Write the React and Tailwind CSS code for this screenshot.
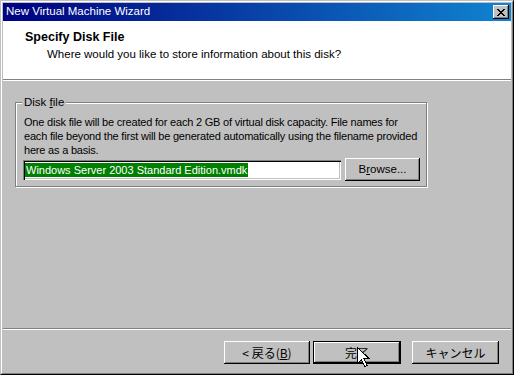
import React from "react"

const FONT = { fontFamily: '"Liberation Sans", Arial, "Noto Sans CJK JP", sans-serif' }
const JP = { fontFamily: '"Noto Sans CJK JP", sans-serif' }

// classic 3D bevel for push buttons
const bevel =
  "bg-[#c0c0c0] shadow-[inset_-1px_-1px_0_#000,inset_1px_1px_0_#fff,inset_-2px_-2px_0_#808080]"

function PushButton({ children, width, isDefault }) {
  return (
    <div className={`${width} h-[23px] ${isDefault ? "border border-black" : ""}`}>
      <div className={`w-full h-full ${bevel} flex items-center justify-center text-[12px] text-black`}>
        {children}
      </div>
    </div>
  )
}

function Cursor() {
  return (
    <svg width="13" height="21" viewBox="0 0 13 21" className="absolute left-[356px] top-[346px]">
      <path
        d="M0.5 0.5 L0.5 16.5 L4.5 12.5 L7.5 19.5 L10 18.5 L7 11.5 L12 11.5 Z"
        fill="#fff"
        stroke="#000"
        strokeWidth="1"
        shapeRendering="crispEdges"
      />
    </svg>
  )
}

export default function App() {
  return (
    <div className="relative w-[514px] h-[375px] border border-t-[#c0c0c0] border-l-[#c0c0c0] border-b-black border-r-black" style={FONT}>
      <div className="w-full h-full border border-t-white border-l-white border-b-[#808080] border-r-[#808080] bg-[#c0c0c0] p-px flex flex-col">
        {/* TITLE BAR */}
        <div className="h-[18px] shrink-0 flex items-center justify-between pl-[3px] pr-[2px] bg-[linear-gradient(90deg,#000080_0%,#1084d0_100%)]">
          <span className="text-white text-[11.5px] leading-none">New Virtual Machine Wizard</span>
          <div className={`w-[16px] h-[14px] ${bevel} flex items-center justify-center`}>
            <svg width="8" height="7" viewBox="0 0 8 7" shapeRendering="crispEdges">
              <path d="M0 0h2v1h1v1h2v-1h1v-1h2v1h-1v1h-1v1h-1v1h1v1h1v1h1v1h-2v-1h-1v-1h-2v1h-1v1h-2v-1h1v-1h1v-1h1v-1h-1v-1h-1v-1h-1z" fill="#000" />
            </svg>
          </div>
        </div>

        {/* HEADER */}
        <div className="h-[59px] shrink-0 bg-white border-b border-[#808080] pl-[22px] pt-[9px]">
          <div className="font-bold text-[12.5px] leading-[14px] text-black">Specify Disk File</div>
          <div className="pl-[22px] pt-[3px] text-[11.5px] leading-[14px] text-black">
            Where would you like to store information about this disk?
          </div>
        </div>
        <div className="h-px shrink-0 bg-white" />

        {/* BODY */}
        <div className="flex-1 pl-[12px] pt-[21px]">
          <div className="relative w-[412px] h-[85px] border border-[#808080] shadow-[inset_1px_1px_0_#fff,1px_1px_0_#fff] pl-[8px] pt-[12px]">
            <span className="absolute left-[6px] top-[-8px] bg-[#c0c0c0] px-[2px] text-[11.5px] leading-[14px] text-black">
              Disk <span className="underline">f</span>ile
            </span>
            <p className="whitespace-nowrap text-[11px] leading-[14px] tracking-[-0.2px] text-black">
              One disk file will be created for each 2 GB of virtual disk capacity. File names for
              <br />
              each file beyond the first will be generated automatically using the filename provided
              <br />
              here as a basis.
            </p>
            <div className="flex items-center mt-[1px]">
              <div className="w-[318px] h-[20px] -ml-[1px] bg-white shadow-[inset_1px_1px_0_#808080,inset_2px_2px_0_#000,inset_-1px_-1px_0_#fff,inset_-2px_-2px_0_#c0c0c0] pl-[2px] pt-[3px]">
                <span className="bg-[#008000] text-white text-[11px] leading-[14px] block w-fit px-px">
                  Windows Server 2003 Standard Edition.vmdk
                </span>
              </div>
              <div className="ml-[4px]">
                <PushButton width="w-[75px]">
                  <span className="text-[11.5px]">B<span className="underline">r</span>owse...</span>
                </PushButton>
              </div>
            </div>
          </div>
        </div>

        {/* FOOTER */}
        <div className="h-px shrink-0 bg-[#808080]" />
        <div className="h-px shrink-0 bg-white" />
        <div className="h-[42px] shrink-0 flex justify-end pt-[11px] pr-[12px]">
          <PushButton width="w-[86px]">
            <span style={JP} className="text-[12px]">
              &lt; 戻る(<span className="underline">B</span>)
            </span>
          </PushButton>
          <div className="ml-[3px]">
            <PushButton width="w-[88px]" isDefault>
              <span style={JP} className="text-[12px]">完了</span>
            </PushButton>
          </div>
          <div className="ml-[11px]">
            <PushButton width="w-[87px]">
              <span style={JP} className="text-[12px]">キャンセル</span>
            </PushButton>
          </div>
        </div>
      </div>
      <Cursor />
    </div>
  )
}
